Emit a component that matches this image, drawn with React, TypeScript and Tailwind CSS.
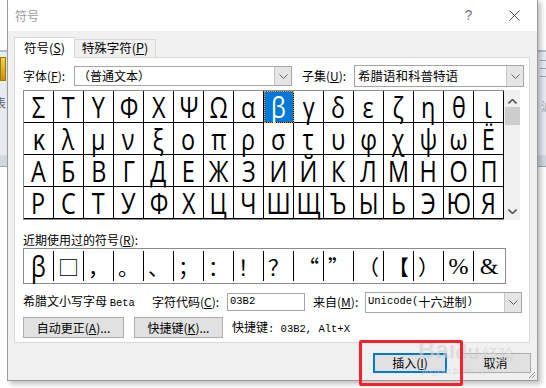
import React from "react";

const ROWS = [
  "ΣΤΥΦΧΨΩαβγδεζηθι",
  "κλμνξοπρστυφχψωЁ",
  "АБВГДЕЖЗИЙКЛМНОП",
  "РСТУФХЦЧШЩЪЫЬЭЮЯ",
];

type Kind = "g" | "c" | "s";
const RECENT: { ch: string; kind: Kind }[] = [
  { ch: "β", kind: "g" },
  { ch: "□", kind: "c" },
  { ch: "，", kind: "c" },
  { ch: "。", kind: "c" },
  { ch: "、", kind: "c" },
  { ch: "；", kind: "c" },
  { ch: "：", kind: "c" },
  { ch: "！", kind: "c" },
  { ch: "？", kind: "c" },
  { ch: "“", kind: "c" },
  { ch: "”", kind: "c" },
  { ch: "（", kind: "c" },
  { ch: "【", kind: "c" },
  { ch: "）", kind: "c" },
  { ch: "%", kind: "s" },
  { ch: "&", kind: "s" },
];

function Chevron({ up = false, color = "#606060", width = 1 }: { up?: boolean; color?: string; width?: number }) {
  return (
    <svg width="9" height="5" viewBox="0 0 9 5">
      <polyline
        points={up ? "0.5,4.5 4.5,0.5 8.5,4.5" : "0.5,0.5 4.5,4.5 8.5,0.5"}
        fill="none"
        stroke={color}
        strokeWidth={width}
      />
    </svg>
  );
}

function Key({ k }: { k: string }) {
  return (
    <>
      (<span className="underline">{k}</span>)
    </>
  );
}

function Mono({ children }: { children: React.ReactNode }) {
  return <span className="font-['Liberation_Mono',monospace] text-[10.5px]">{children}</span>;
}

function DropBtn() {
  return (
    <div className="flex w-[17px] items-center justify-center border-l border-[#c8c8c8] bg-[#e5e5e5]">
      <Chevron />
    </div>
  );
}

export default function App() {
  return (
    <div className="relative h-[388px] w-[546px] overflow-hidden bg-white font-['Noto_Sans_CJK_SC',sans-serif] text-[12px] text-black">
      {/* background app behind the dialog */}
      <div className="absolute left-0 top-[50px] h-[2px] w-[546px] bg-[#b3c0cf]" />
      <div className="absolute left-0 top-[52px] h-[114px] w-[546px] bg-[#e8ecf1]" />
      <div className="absolute left-0 top-[155px] h-[11px] w-[546px] bg-[#d3d9e1]" />
      <div className="absolute left-0 top-[166px] h-[1px] w-[546px] bg-[#9ea8b4]" />
      <div className="absolute left-0 top-[57px] h-[24px] w-[6px] border border-[#9c7a12] bg-gradient-to-b from-[#f7d34a] to-[#c8920e]" />
      <div className="absolute left-[-6px] top-[94px] text-[12px] text-[#555]">表</div>
      <div className="absolute left-[540px] top-[60px] h-[1px] w-[6px] bg-[#9aa6b4]" />
      <div className="absolute left-[540px] top-[68px] h-[1px] w-[6px] bg-[#9aa6b4]" />
      <div className="absolute left-[540px] top-[76px] h-[1px] w-[6px] bg-[#9aa6b4]" />
      <div className="absolute left-[541px] top-[98px] text-[11px] text-[#9aa6b4]">沪</div>

      {/* dialog */}
      <div className="absolute left-[7px] top-[-1px] flex h-[382px] w-[531px] flex-col border border-[#9a9a9a] bg-[#f0f0f0] shadow-[3px_3px_5px_rgba(0,0,0,0.25)]">
        {/* title bar */}
        <div className="flex h-[31px] items-center bg-white">
          <div className="flex-1 pl-[7px] text-[12px] text-[#9a9a9a]">符号</div>
          <div className="flex h-full w-[45px] items-center justify-center font-['Liberation_Sans',sans-serif] text-[14px] text-[#777]">?</div>
          <div className="flex h-full w-[46px] items-center justify-center">
            <svg width="11" height="11" viewBox="0 0 11 11">
              <path d="M0.5 0.5 L10.5 10.5 M10.5 0.5 L0.5 10.5" stroke="#555" strokeWidth="1" />
            </svg>
          </div>
        </div>

        {/* body */}
        <div className="flex flex-1 flex-col pl-[6px] pt-[6px]">
          {/* tabs */}
          <div className="flex h-[21px] items-end">
            <div className="relative z-10 flex h-[21px] w-[61px] items-center justify-center border-l border-r border-t border-[#d9d9d9] bg-white text-[12.5px]">
              符号<Key k="S" />
            </div>
            <div className="mb-[1px] flex h-[18px] w-[81px] items-center justify-center border-r border-t border-[#d9d9d9] bg-[#f0f0f0] text-[12.5px]">
              特殊字符<Key k="P" />
            </div>
          </div>

          {/* panel */}
          <div className="mt-[-1px] flex h-[286px] w-[516px] flex-col border border-[#d9d9d9] bg-white pl-[8px] pt-[8px]">
            {/* font / subset row */}
            <div className="flex h-[20px] items-center">
              <div className="w-[51px]">字体<Key k="F" />:</div>
              <div className="flex h-[20px] w-[218px] border border-[#a6a6a6] bg-white">
                <div className="flex-1 pl-[3px] leading-[18px]">（普通文本）</div>
                <DropBtn />
              </div>
              <div className="ml-[10px] w-[52px]">子集<Key k="U" />:</div>
              <div className="flex h-[22px] w-[170px] border border-[#a6a6a6] bg-white">
                <div className="flex-1 pl-[3px] text-[12.5px] leading-[20px]">希腊语和科普特语</div>
                <DropBtn />
              </div>
            </div>

            {/* symbol grid */}
            <div className="mt-[4px] flex">
              <div className="w-[481px] border-b border-l border-t border-[#8c8c8c]">
                {ROWS.map((row, ri) => (
                  <div key={ri} className="flex">
                    {Array.from(row).map((ch, ci) => {
                      const sel = ri === 0 && ci === 8;
                      return (
                        <div
                          key={ci}
                          className={
                            sel
                              ? "flex h-[32px] w-[30px] items-center justify-center border-b border-r border-black bg-[#0078d7] text-white outline outline-1 -outline-offset-1 outline-dotted outline-[#f39a1e]"
                              : "flex h-[32px] w-[30px] items-center justify-center border-b border-r border-black"
                          }
                        >
                          <span className="inline-block scale-x-[0.78] font-['Open_Sans',sans-serif] text-[30px] leading-none">
                            {ch}
                          </span>
                        </div>
                      );
                    })}
                  </div>
                ))}
              </div>
              <div className="flex h-[130px] w-[16px] flex-col items-center bg-[#f0f0f0]">
                <div className="mt-[8px] flex h-[6px] items-center">
                  <Chevron up color="#555" width={1.6} />
                </div>
                <div className="mt-[3px] h-[18px] w-[15px] bg-[#cdcdcd]" />
                <div className="flex-1" />
                <div className="mb-[6px] flex h-[6px] items-center">
                  <Chevron color="#555" width={1.6} />
                </div>
              </div>
            </div>

            {/* recent */}
            <div className="mt-[12px] h-[16px] leading-[16px]">近期使用过的符号<Key k="R" />:</div>
            <div className="flex h-[36px] w-[483px] border border-[#8c8c8c] py-[2px]">
              {RECENT.map((r, i) => (
                <div
                  key={i}
                  className={
                    i < RECENT.length - 1
                      ? "flex h-full w-[30px] items-center justify-center border-r border-black"
                      : "flex h-full w-[30px] items-center justify-center"
                  }
                >
                  {r.kind === "g" ? (
                    <span className="inline-block scale-x-[0.78] font-['Open_Sans',sans-serif] text-[30px] leading-none">{r.ch}</span>
                  ) : r.kind === "c" ? (
                    <span className="font-['Noto_Sans_CJK_SC',sans-serif] text-[21px] leading-none">{r.ch}</span>
                  ) : (
                    <span className="font-['Liberation_Serif',serif] text-[24px] leading-none">{r.ch}</span>
                  )}
                </div>
              ))}
            </div>

            {/* info row */}
            <div className="mt-[8px] flex h-[20px] items-center">
              <div className="w-[129px]">
                希腊文小写字母 <Mono>Beta</Mono>
              </div>
              <div className="w-[75px]">字符代码<Key k="C" />:</div>
              <div className="flex h-[18px] w-[78px] items-center border border-[#a6a6a6] bg-white pl-[2px]">
                <Mono>03B2</Mono>
              </div>
              <div className="ml-[8px] w-[52px]">来自<Key k="M" />:</div>
              <div className="flex h-[21px] w-[157px] border border-[#a6a6a6] bg-white">
                <div className="flex flex-1 items-center pl-[2px]">
                  <Mono>Unicode(</Mono>十六进制<Mono>)</Mono>
                </div>
                <DropBtn />
              </div>
            </div>

            {/* buttons row */}
            <div className="mt-[5px] flex h-[21px] items-center">
              <div className="flex h-[21px] w-[101px] items-center justify-center border border-[#adadad] bg-[#e1e1e1]">
                自动更正<Key k="A" />...
              </div>
              <div className="ml-[10px] flex h-[21px] w-[89px] items-center justify-center border border-[#adadad] bg-[#e1e1e1]">
                快捷键<Key k="K" />...
              </div>
              <div className="ml-[9px]">
                快捷键<Mono>: 03B2, Alt+X</Mono>
              </div>
            </div>
          </div>

          {/* bottom buttons */}
          <div className="mt-[10px] flex h-[20px] justify-end pr-[6px]">
            <div className="flex h-[20px] w-[74px] items-center justify-center border-2 border-[#0078d7] bg-[#e1e1e1]">
              插入<Key k="I" />
            </div>
            <div className="ml-[13px] flex h-[20px] w-[71px] items-center justify-center border border-[#adadad] bg-[#e1e1e1]">
              取消
            </div>
          </div>
        </div>

        {/* resize grip */}
        <svg className="absolute bottom-[1px] right-[1px]" width="9" height="9" viewBox="0 0 9 9">
          <path d="M8 2 L2 8 M8 5 L5 8" stroke="#9a9a9a" strokeWidth="1" />
        </svg>
      </div>

      {/* watermark */}
      <div className="absolute left-[418px] top-[338px] flex items-end font-['Liberation_Sans',sans-serif] text-[24px] font-bold leading-none text-[#d0d0d0] opacity-60">
        Bai<span className="text-[20px]">du</span>
        <span className="ml-[2px] font-['Noto_Sans_CJK_SC',sans-serif] text-[16px] font-normal">经验</span>
      </div>
      <div className="absolute left-[422px] top-[365px] font-['Liberation_Sans',sans-serif] text-[9px] text-[#cfcfcf] opacity-60">
        jingyan.baidu.com
      </div>

      {/* red highlight */}
      <div className="absolute left-[359px] top-[340px] h-[46px] w-[104px] rounded-[2px] border-[3px] border-[#f5222d]" />
    </div>
  );
}
